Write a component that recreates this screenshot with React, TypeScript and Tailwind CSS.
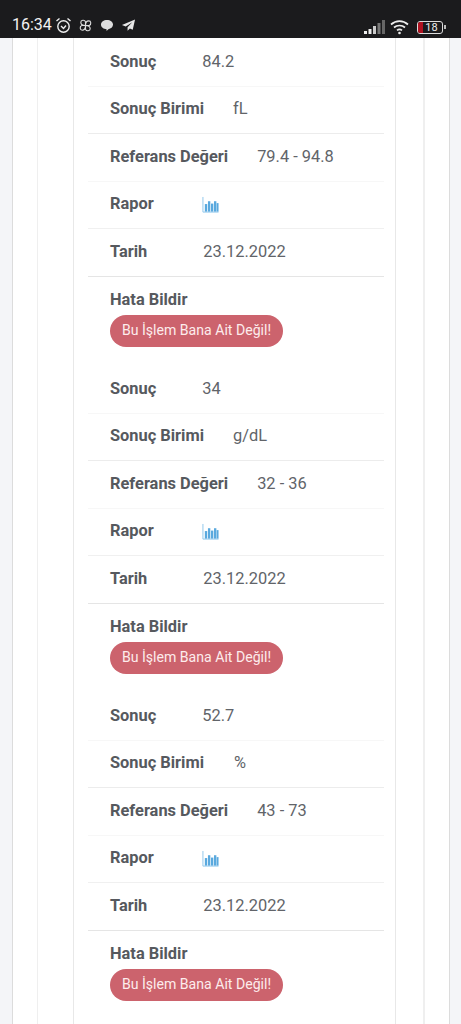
const font = "font-['Roboto',sans-serif]";

function ChartIcon() {
  return (
    <svg width="17" height="18" viewBox="0 0 18 18" className="block">
      <path d="M1 0.500V16.500H17.500" fill="none" stroke="#8cc6ec" strokeWidth="1" />
      <g fill="#5aa9de">
        <rect x="3" y="8" width="2.500" height="8" />
        <rect x="6.300" y="5" width="2.500" height="11" />
        <rect x="9.500" y="7.500" width="2.500" height="8.500" />
        <rect x="12.700" y="5" width="2.500" height="11" />
        <rect x="15.500" y="7" width="2" height="9" />
      </g>
    </svg>
  );
}

function Row({ label, value, gap, border, icon }: { label: string; value?: string; gap: string; border: string; icon?: boolean }) {
  return (
    <div className={`flex h-[47.5px] items-center pl-[22px] ${border}`}>
      <span className="text-[16.4px] font-bold text-[#56595e]">{label}</span>
      <span className={`${gap} text-[16.4px] text-[#616469]`}>{icon ? <ChartIcon /> : value}</span>
    </div>
  );
}

function Block({ value, unit, unitGap, range }: { value: string; unit: string; unitGap: string; range: string }) {
  return (
    <div className="h-[327px]">
      <Row label="Sonuç" value={value} gap="ml-[46px]" border="border-b border-[#f7f7f7]" />
      <Row label="Sonuç Birimi" value={unit} gap={unitGap} border="border-b border-[#ececec]" />
      <Row label="Referans Değeri" value={range} gap="ml-[29px]" border="border-b border-[#f7f7f7]" />
      <Row label="Rapor" gap="ml-[48px]" border="border-b border-[#f0f0f0]" icon />
      <Row label="Tarih" value="23.12.2022" gap="ml-[56px]" border="border-b border-[#e5e5e5]" />
      <div className="pl-[22px] pt-[13px]">
        <div className="text-[16.4px] font-bold leading-[20px] text-[#56595e]">Hata Bildir</div>
        <button className="mt-[5px] flex h-[32px] w-[173px] items-center justify-center rounded-full bg-[#cc636d] text-[14.1px] text-[#fdecec]">
          Bu İşlem Bana Ait Değil!
        </button>
      </div>
    </div>
  );
}

export default function App() {
  return (
    <div className={`flex h-[1024px] w-[461px] flex-col overflow-hidden bg-white ${font}`}>
      <header className="flex h-[38px] shrink-0 items-end justify-between bg-[#1b1b1d] pb-[3px] pl-[12px] pr-[15px] text-white">
        <div className="flex items-center gap-[3px]">
          <span className="text-base leading-[20px] text-[#f2f2f2]">16:34</span>
          <svg width="17" height="17" viewBox="0 0 17 17" fill="none" stroke="#eee" strokeWidth="1.4">
            <circle cx="8.5" cy="9.5" r="5.7" />
            <path d="M6 9l2.5 2.5L11 8.5M1.5 4l3-2.5M15.5 4l-3-2.5" />
          </svg>
          <svg width="15" height="15" viewBox="0 0 16 16" fill="none" stroke="#ddd" strokeWidth="1.2" className="ml-[3px]">
            <path d="M8 8C5 8 3 7 3 4.5S7 1.5 8 4zM8 8c0-3 1-5 3.5-5s3 4 .5 5zM8 8c3 0 5 1 5 3.5s-4 3-5 .5zM8 8c0 3-1 5-3.5 5s-3-4-.5-5z" />
          </svg>
          <svg width="14" height="13" viewBox="0 0 15 14" className="ml-[4px]">
            <path d="M7.5 1C11 1 14 3 14 6s-2.5 4.5-5 5l-2 2v-2C4 11 1 9 1 6s3-5 6.5-5z" fill="#ddd" />
          </svg>
          <svg width="15" height="14" viewBox="0 0 16 14" className="ml-[4px]">
            <path d="M15 1L1 7l4 1.6L12 4 7 9.500V13l2.500-2.400 3 1.400z" fill="#e8e8e8" />
          </svg>
        </div>
        <div className="flex items-center gap-[5px]">
          <svg width="21" height="14" viewBox="0 0 21 14">
            <rect x="0" y="11" width="3" height="3" fill="#eee" />
            <rect x="4.5" y="9" width="3" height="5" fill="#eee" />
            <rect x="9" y="6" width="3" height="8" fill="#ccc" />
            <rect x="13.5" y="3" width="3" height="11" fill="#777" />
            <rect x="18" y="0" width="3" height="14" fill="#666" />
          </svg>
          <svg width="20" height="16" viewBox="0 0 20 16" fill="none" stroke="#eee" strokeWidth="1.7">
            <path d="M1 5.500c5-4.500 12-4.500 17 0M4 8.500c3-2.700 8-2.700 11 0M7 11.300c1.500-1.200 3.500-1.200 5 0" />
            <circle cx="9.500" cy="14" r="1.300" fill="#eee" stroke="none" />
          </svg>
          <div className="ml-[2px] flex items-center">
            <div className="relative flex h-[13px] w-[26px] items-center justify-center overflow-hidden rounded-[3px] border border-[#ddd] pl-[3px] text-[11px] leading-none text-[#eee]">
              <span className="absolute inset-y-0 left-0 w-[5px] bg-[#b01220]" />
              18
            </div>
            <div className="ml-[1px] h-[4px] w-[2px] bg-[#bbb]" />
          </div>
        </div>
      </header>
      <main className="flex min-h-0 flex-1 bg-[#f4f5f8] pl-[12px] pr-[11px]">
        <div className="flex-1 border-l border-r border-[#dcdcdc] bg-white pl-[24px] pr-[24px]">
          <div className="h-full border-l border-r-2 border-[#efefef] pl-[35px] pr-[27px]">
            <div className="h-full border-l border-r border-[#e8e8e8] pl-[14px] pr-[11px] pt-[1px]">
              <Block value="84.2" unit="fL" unitGap="ml-[29px]" range="79.4 - 94.8" />
              <Block value="34" unit="g/dL" unitGap="ml-[29px]" range="32 - 36" />
              <Block value="52.7" unit="%" unitGap="ml-[30px]" range="43 - 73" />
            </div>
          </div>
        </div>
      </main>
    </div>
  );
}
